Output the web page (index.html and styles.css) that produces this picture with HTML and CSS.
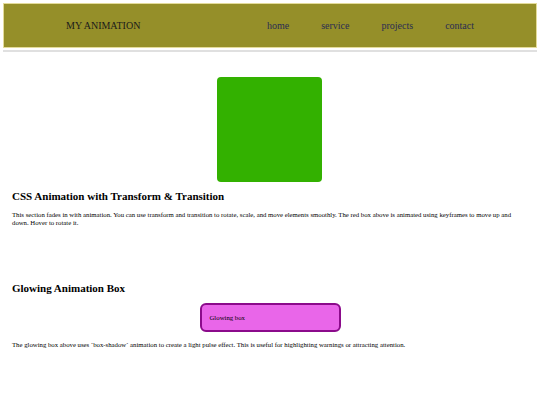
FILE: index.html
```html
<!DOCTYPE html>
<html>
<head>
<meta charset="utf-8">
<link rel="stylesheet" href="styles.css">
</head>
<body>
<header class="topbar">
  <div class="logo">MY ANIMATION</div>
  <nav class="nav">
    <a href="#">home</a>
    <a href="#">service</a>
    <a href="#">projects</a>
    <a href="#">contact</a>
  </nav>
</header>
<div class="rule"></div>
<main>
  <section class="anim">
    <div class="box"></div>
    <h2 class="title">CSS Animation with Transform &amp; Transition</h2>
    <p class="text">This section fades in with animation. You can use transform and transition to rotate, scale, and move elements smoothly. The red box above is animated using keyframes to move up and down. Hover to rotate it.</p>
  </section>
  <section class="glow-sec">
    <h2 class="title">Glowing Animation Box</h2>
    <div class="glow-wrap"><div class="glow">Glowing box</div></div>
    <p class="text">The glowing box above uses `box-shadow` animation to create a light pulse effect. This is useful for highlighting warnings or attracting attention.</p>
  </section>
</main>
</body>
</html>
```
FILE: styles.css
```css
html, body {
  margin: 0;
  padding: 0;
  background: #fff;
}
body {
  padding: 3px 3px 0 3px;
  font-family: "Liberation Serif", "Times New Roman", serif;
  color: #000;
}
.topbar {
  height: 43px;
  background: #958f29;
  border: 1px solid #e4dc9a;
  display: flex;
  align-items: center;
}
.logo {
  margin-left: 62px;
  font-size: 10px;
  color: #1a1a1a;
}
.nav {
  margin-left: auto;
  margin-right: 62px;
  display: flex;
  gap: 32px;
}
.nav a {
  font-size: 10px;
  color: #2a2d52;
  text-decoration: none;
}
.rule {
  height: 2px;
  background: #e0e0e0;
  margin-top: 2px;
}
main {
  padding: 0 9px;
}
.anim {
  padding-top: 25px;
}
.box {
  width: 105px;
  height: 105px;
  background: #33b100;
  border-radius: 4px;
  margin: 0 auto;
  position: relative;
  left: -1px;
}
.title {
  font-size: 11px;
  font-weight: bold;
  margin: 8px 0 0 0;
  line-height: 13px;
}
.text {
  font-size: 6.75px;
  line-height: 8px;
  margin: 8px 0 0 0;
}
.glow-sec {
  padding-top: 47px;
}
.glow-wrap {
  display: flex;
  justify-content: center;
  margin-top: 8px;
}
.glow {
  width: 122px;
  height: 25px;
  padding: 0 7px 0 8px;
  display: flex;
  align-items: center;
  font-size: 6.75px;
  background: #e966e9;
  border: 2px solid #8b0b8b;
  border-radius: 6px;
}
.glow-sec .text {
  margin-top: 9px;
}
```
